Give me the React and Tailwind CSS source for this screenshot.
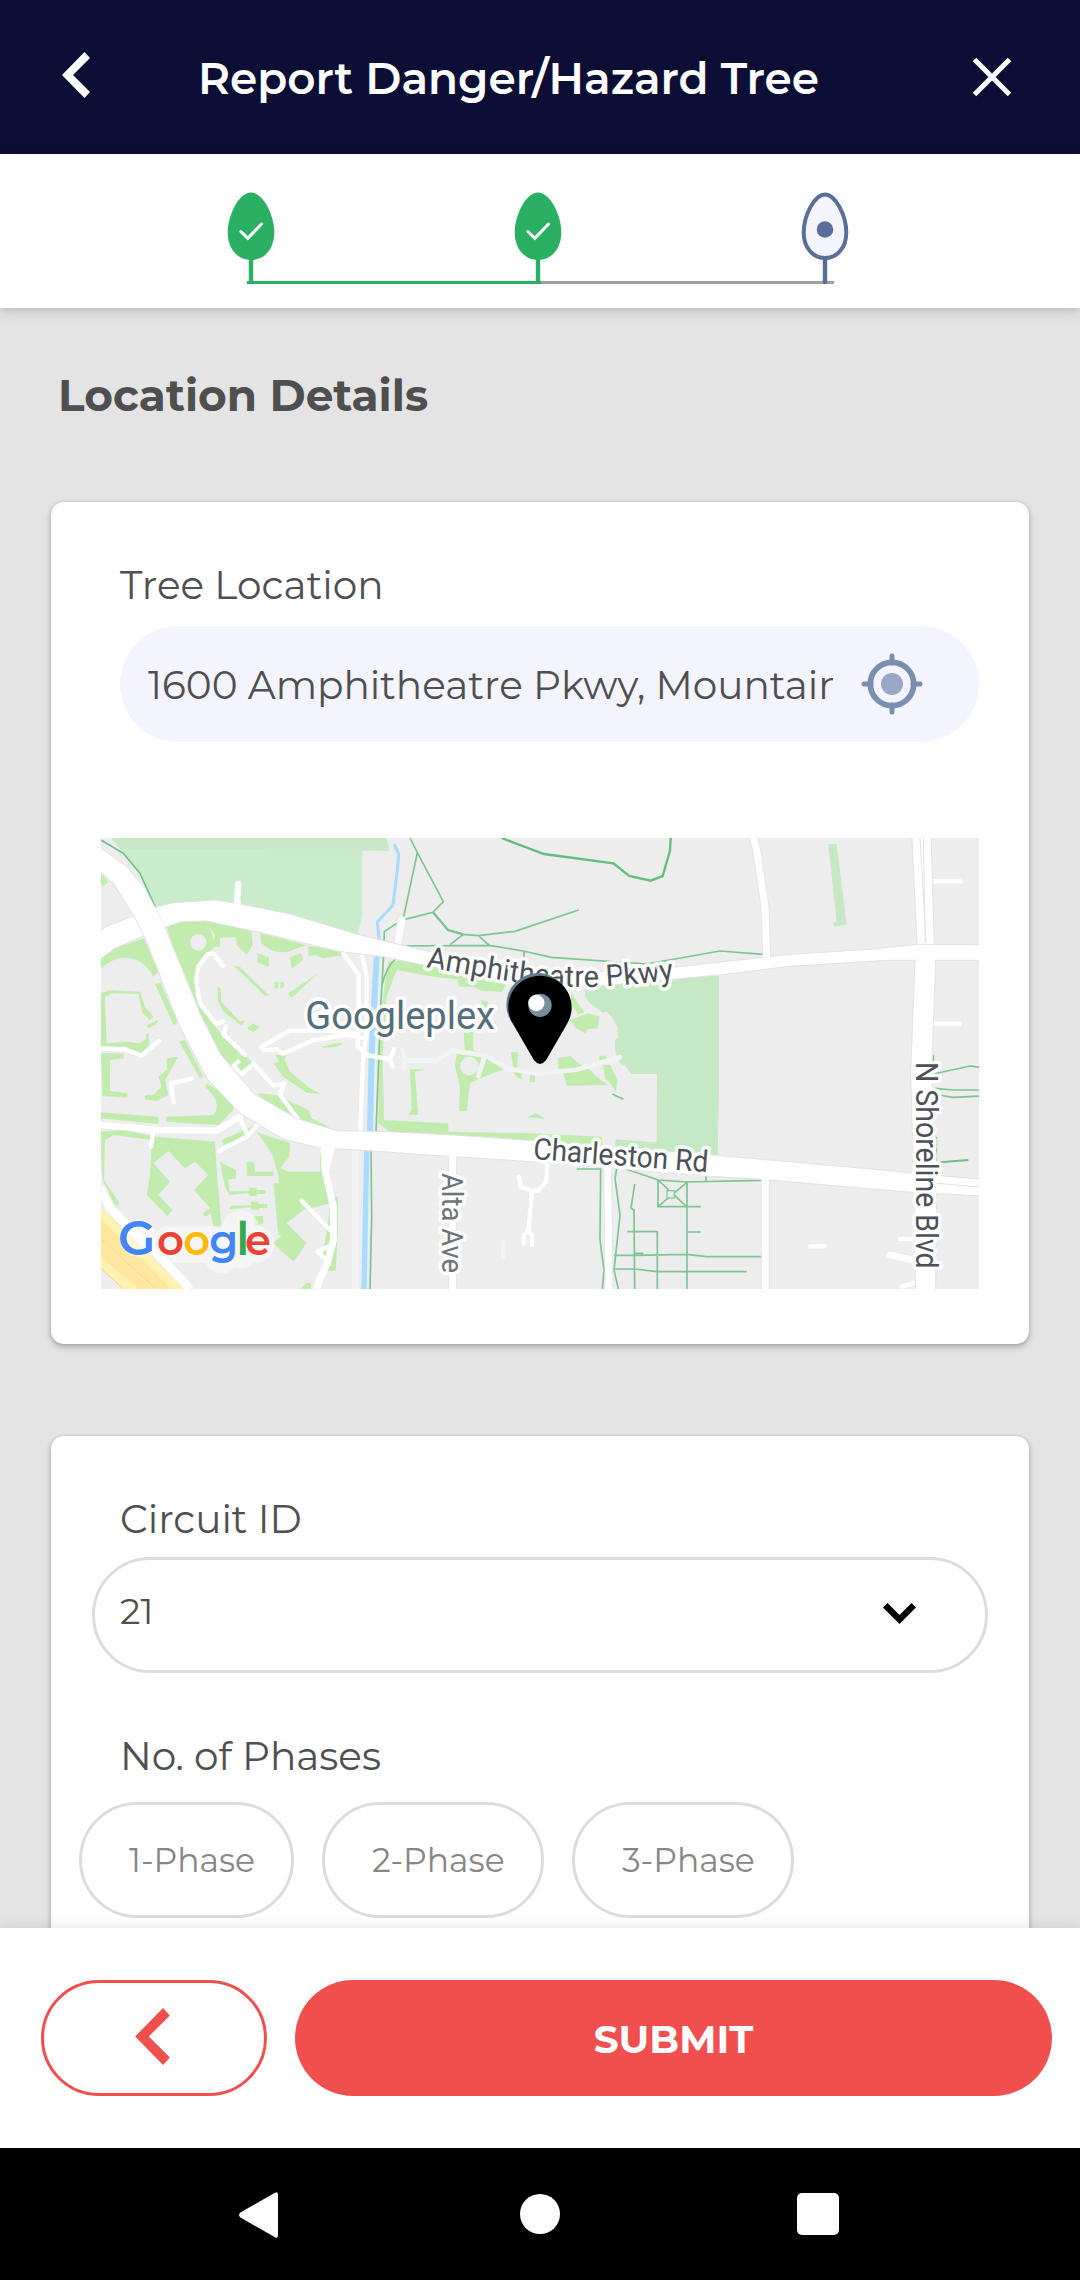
import React from "react";

const GREEN = "#2bb063";
const SLATE = "#5b6e99";

function BackChevron({ className }) {
  return (
    <svg className={className} viewBox="0 0 28 46" fill="currentColor">
      <polygon points="22.5,0 28,6 11,23 28,40 22.5,46 0,23" />
    </svg>
  );
}

/* One tree-shaped marker of the progress bar. */
function StepTree({ done }) {
  return (
    <svg className="h-[92px] w-[48px]" viewBox="0 0 48 92" fill="none">
      <path d="M24 66V90" stroke={done ? GREEN : SLATE} strokeWidth="4.4" strokeLinecap="round" />
      {done ? (
        <>
          <path d="M24 .5C36 .5 47.3 23 47.3 40.5C47.3 57 37.500 68 24 68S.7 57 .7 40.500C.7 23 12 .5 24 .5Z" fill={GREEN} />
          <path d="M13.800 39.500L20.800 46.300L34.500 32" stroke="#fff" strokeWidth="3" strokeLinecap="round" />
        </>
      ) : (
        <>
          <path d="M24 2.500C34.500 2.500 45.300 23.500 45.300 40.500C45.300 56 36 66 24 66S2.700 56 2.700 40.500C2.700 23.500 13.500 2.500 24 2.500Z" fill="#f4f4ff" stroke={SLATE} strokeWidth="4" />
          <circle cx="24" cy="37.500" r="8.300" fill={SLATE} />
        </>
      )}
    </svg>
  );
}

function Locate() {
  return (
    <svg className="h-[62px] w-[62px] shrink-0" viewBox="0 0 62 62" fill="none">
      <path d="M31 3V10M31 52V59M3 31H10M52 31H59" stroke="#7b8db0" strokeWidth="5" strokeLinecap="round" />
      <circle cx="31" cy="31" r="21.700" stroke="#7b8db0" strokeWidth="5.700" />
      <circle cx="31" cy="31" r="11" fill="#9ba7c6" />
    </svg>
  );
}

function MapLabel({ children, size, fill = "#4c5157", ...rest }) {
  return (
    <text
      fontFamily="Roboto, sans-serif"
      fontSize={size}
      fill={fill}
      stroke="#fff"
      strokeOpacity="0.8"
      strokeWidth="22"
      strokeLinejoin="round"
      paintOrder="stroke"
      lengthAdjust="spacingAndGlyphs"
      {...rest}
    >
      {children}
    </text>
  );
}

function LocationMap() {
  return (
    <svg className="ml-[50px] block h-[451px] w-[878px]" viewBox="33 54 2634 1353" preserveAspectRatio="none">
      <rect x="33" y="54" width="2634" height="1353" fill="#ededed" />

      {/* parks */}
      <g fill="#c9edca">
        <polygon points="65,54 890,54 898,92 817,92 817,290 802,342 600,290 440,256 375,244 195,265 150,160 100,100" />
        <polygon points="65,54 890,54 898,92 600,90 500,86 90,86" fill="#c8e8c7" />
        <g fill="#c5e8c5">
          <polygon points="1485,500 1600,490 1740,478 1887,465 1887,795 1883,1010 1575,990 1577,958 1700,967 1701,762 1625,762 1608,740 1590,730 1575,690 1575,660 1584,655 1582,620 1565,590 1550,575 1538,577 1498,548 1486,530" />
          <polygon points="2215,72 2240,72 2270,313 2232,320 2230,308 2240,305" />
        </g>
      </g>

      {/* landscaping */}
      <g fill="#c1ecae">
        <path d="M33 160L55 185L40 198L33 190Z" />
        <path d="M33 415L75 385L162 355L205 455L190 470C160 415 110 400 60 425L33 445Z" />
        <path d="M230 322L290 300L375 305L485 335L488 375L470 405L440 375L438 352L390 354V380H365L375 345L350 310Q375 345 370 385L350 400L325 430L312 480L318 530L330 560L400 650L490 730L440 760L380 690L310 560Z" />
        <path d="M510 340L650 375L622 385Q560 415 515 370ZM505 400L537 412V442L500 425ZM600 412L632 400L640 420L605 445ZM655 378L750 392L765 405L700 415L672 405L655 410Z" />
        <path d="M430 436L450 440L530 520L540 525L525 528L450 455ZM595 520L685 460L605 533ZM553 485H565V505H553ZM570 485H582V500L572 507ZM383 500L392 505L394 545L450 605L465 600L455 617L400 575L383 540ZM470 625L490 610L510 622L490 637Z" />
        <path d="M195 492L212 488L262 605L252 617ZM33 520L60 510L150 515L165 560L190 590L180 600L158 580L145 522L65 520L45 530L50 670L110 665L150 670L170 655L180 670L155 710L110 680L33 678Z" />
        <path d="M268 665L285 660L340 770L330 775ZM33 700L100 700L102 715L60 720V812L112 820V833L38 828ZM230 715L265 710L225 780L235 825L200 843L165 838V825L190 825L215 800L205 770L230 750ZM350 790C380 810 440 840 430 870L385 915L228 905V890L370 885Q400 850 345 800ZM33 877L205 890V912L33 895Z" />
        <path d="M550 730L585 720L600 755L660 805L693 822L650 818L580 770ZM505 820L560 825L655 870L665 895L720 922L650 910L520 850ZM555 705L590 705L575 735Z" />
        <path d="M695 680L745 668L760 672L740 680L705 684ZM168 640H176V680H168ZM170 615L205 600L200 612L175 625Z" />
        <path d="M33 935L100 930L200 950L375 965L380 1050L395 1225L370 1220L362 1180L345 1190L338 1180L360 1165L312 1110L355 1065L315 1025L285 1045L235 993L190 1030L240 1085L205 1125L248 1170L232 1187L170 1125L180 1070L185 960L70 945L45 960L42 1080L88 1150L80 1158L45 1110L35 1050Z" />
        <path d="M395 960L490 918L500 930L470 950L400 975ZM540 950L600 968L598 1010L570 1045L600 1055L690 1055V1000L710 1040L735 1130L744 1130V1230L737 1353H715L700 1300L715 1200L720 1150L640 1170L590 1210L650 1270L610 1325L550 1270L575 1245L565 1065L545 1000L500 935Z" />
        <path d="M550 1090L600 1088L705 1095L712 1130L640 1118L578 1122L575 1245L565 1245Z" />
        <path d="M390 1025L438 1050V1075L415 1078L420 1130L405 1100ZM470 1025H492L495 1055H550V1068H470ZM478 1103H500V1110H527V1122H500V1128H478L475 1120L420 1125V1114L478 1112ZM483 1145H505V1152H532V1164H508V1170H485L482 1162L420 1168V1158L483 1156ZM490 1188H520V1210L495 1218Z" />
        <path d="M880 520L895 425L940 422L1100 455L1250 490L1235 515L1175 512L1150 500L1105 500V478L1040 472L920 450L890 530L878 700L882 900L1075 910V935L1330 940L1535 950V975L1330 962L900 935L865 910L866 700Z" />
        <path d="M1120 620H1150V690L1175 705L1250 745L1170 775L1140 790L1130 873H1107L1110 800L1095 740L1100 700H1125ZM1175 540L1195 545L1192 620L1175 600ZM960 748H1010L975 755L985 885H955L965 870ZM1262 697H1283V745L1295 762V780L1275 765ZM1320 765H1335V787H1320ZM1310 892L1340 880L1365 896Z" />
        <path d="M1445 520L1460 545L1483 577L1465 583L1440 550ZM1440 600L1495 580L1528 590L1522 625L1490 628L1487 642L1455 622ZM1402 715L1440 708L1465 730L1495 745L1520 770L1553 795L1430 797L1420 760L1405 745ZM1540 735L1560 735L1583 780L1578 817L1565 795L1545 775ZM1528 707H1548V720H1528ZM650 1388L663 1390V1407H630Z" />
      </g>
      <circle cx="325" cy="367" r="25" fill="#ededed" />
      <circle cx="1138" cy="738" r="28" fill="#ededed" />

      {/* creek */}
      <g fill="none" stroke="#a9daff">
        <path d="M912 72L926 102L922 150L909 255L862 306L868 362" strokeWidth="9" />
        <path d="M860 410L845 700L840 935" strokeWidth="18" />
        <path d="M830 992L822 1407" strokeWidth="16" />
      </g>

      {/* trails */}
      <g fill="none" stroke="#7cc592" strokeWidth="5">
        <path d="M33 60L100 100L150 160L195 260" stroke="#6dbf85" />
        <path d="M960 54L982 98L1060 245L1029 277L945 298M982 98L940 295M1029 277L1074 330L1120 343L1165 347L1275 334L1466 270M920 310L883 335L880 420L872 560L858 935M1120 343L1080 374M1165 347L1198 376M930 378L1198 376L1300 393L1384 412L1670 432L1890 393L2020 403M1302 393V412M915 418Q890 440 876 495" />
        <path d="M1029 277L1074 330L1120 343" strokeWidth="7" />
        <path d="M843 992L845 1190L840 1407" />
        <path d="M1235 54L1362 102L1570 130L1618 168L1682 182L1718 168L1740 92L1742 54" stroke="#63bd7d" strokeWidth="7" />
        <path d="M1567 822L1600 838M1460 1047H1532L1530 1260L1542 1350L1537 1407M1580 1047L1575 1075L1590 1185L1572 1350L1585 1407M1610 1048L1705 1080L1790 1086L2013 1081M1848 1068V1085M1704 1080V1160H1832M1791 1086V1407M1704 1080L1790 1160M1790 1088L1704 1160M1634 1092L1623 1165L1632 1170L1634 1407M1612 1235H1702V1407M1790 1236H1832M1572 1306H1634L1790 1303L1850 1310H2013M1572 1347H1634L1702 1355H1970M1634 1300H1660" />
        <path d="M2530 705V740M2530 762L2640 738L2670 742M2535 805L2590 810H2670M2545 825L2590 832L2670 828M2539 950V1025" />
        <path d="M2550 1027L2635 1020" strokeWidth="6" stroke="#6dbf85" />
      </g>
      <rect x="1731" y="1112" width="22" height="22" fill="#ededed" stroke="#84c999" strokeWidth="4" />

      {/* faint drives */}
      <g fill="none" stroke="#f2f3f5" strokeLinecap="round" strokeLinejoin="round" strokeWidth="14">
        <path d="M938 690L945 722L940 745M945 722H1040L1085 692L1185 706L1250 745L1340 760L1455 750L1590 712M1185 706L1165 768" />
        <path d="M796 990V1407" strokeWidth="20" strokeLinecap="butt" />
        <path d="M1240 1265V1310" />
      </g>

      {/* minor streets */}
      <g fill="none" stroke="#fff" strokeLinecap="round" strokeLinejoin="round" strokeWidth="13">
        <path d="M398 436L370 400L352 403L325 440L318 480L330 550L378 612L398 605M408 620L400 643L465 705M445 725L430 738L455 762L480 740M490 730L550 797L583 790M580 795L570 825L635 912" />
        <path d="M515 680L598 632L700 632L800 640M520 690L560 688L578 702L665 662L770 645L825 655M760 400L806 465V600L803 680L830 705L900 718M912 688L900 718L908 740M815 400L830 470V640L820 705L810 935" />
        <path d="M33 686L105 688L155 706L207 663M305 776L243 790L251 847" />
        <path d="M190 935L183 980M450 895L470 940M503 915L470 950L388 992" />
        <path d="M33 915L205 930L380 932L450 890" strokeWidth="19" />
        <path d="M635 1142L730 1240M725 1275L682 1295L715 1325" />
        <path d="M1372 1030L1368 1085L1345 1112H1325L1292 1100L1287 1070M1326 1112L1315 1235L1302 1243L1301 1272M1315 1235L1326 1245V1275" />
        <path d="M445 192L440 255M937 298L920 385" strokeWidth="19" />
        <path d="M2530 184H2612M2530 611H2608M2160 1279H2204M2430 1257H2480M2480 1387L2435 1400" />
        <path d="M2400 1305L2480 1322" strokeWidth="20" />
      </g>
      <g fill="none" stroke="#fff" strokeLinejoin="round">
        <path d="M702 985L705 1050L730 1160L730 1260L712 1330L690 1375L680 1407M724 985L708 1045" strokeWidth="21" />
        <path d="M33 1100L60 1165L110 1215L200 1300L300 1407" strokeWidth="26" />
      </g>
      <g fill="none" strokeLinejoin="round">
        <path d="M1088 1000V1407M1990 54L2000 90L2025 260L2030 415M1553 1035L1557 1407M2026 1070V1407" stroke="#e1e1e8" strokeWidth="26" />
        <path d="M1088 1000V1407M1990 54L2000 90L2025 260L2030 415M1553 1035L1557 1407M2026 1070V1407" stroke="#fff" strokeWidth="21" />
      </g>

      {/* arterials */}
      <g fill="#fff" stroke="#e1e1e8" strokeWidth="3">
        <path d="M2465 40L2482 380L2475 422L2462 760L2470 1050L2477 1420H2537L2540 1050L2525 760L2537 422L2533 372L2523 40Z" />
        <path d="M20 335L60 315L130 288L195 262L250 248L375 240L440 250L600 282L800 342L880 362L1000 390L1200 430L1400 455H1600L1750 442L2100 403L2350 387L2480 373L2680 374V421H2390L2100 439L1885 465L1750 478L1560 495L1400 500L1200 465L1000 435L880 410L750 395L500 335L350 303L275 305L225 322L160 348L75 385L20 425Z" />
        <path d="M20 75L110 140L165 205L195 262L225 322L290 480L330 580L390 700L490 820L620 895L740 932L900 935L1090 945L1330 962L1880 1006L2320 1045L2560 1068L2680 1078V1128L2480 1118L2320 1105L2040 1080L1850 1068L1400 1030L1090 1010L800 990L690 985L580 957L450 880L350 775L265 610L200 440L162 348L130 285L70 190L20 145Z" />
      </g>
      <path d="M2484 374L2535 376L2532 425L2480 423ZM2466 1040H2538V1125H2478ZM135 285L195 264L225 320L165 350ZM435 240H452V262H435ZM2020 400H2039V420H2020ZM1078 1000H1098V1018H1078ZM1542 1035H1564V1052H1542ZM2016 1070H2036V1085H2016ZM694 975H733V995H694Z" fill="#fff" />
      <path d="M2490 54L2508 368M2500 54L2506 368M2540 1090L2670 1101" stroke="#e1e1e8" strokeWidth="3" fill="none" />
      <path d="M33 1163L283 1407H100L33 1345Z" fill="#fff1b0" />
      <path d="M33 1198L245 1407H200L33 1255ZM33 1262L190 1407H145L33 1310Z" fill="#ffe79e" />
      <path d="M33 1258L197 1407M33 1345L100 1407" stroke="#f2d27c" strokeWidth="3" />

      {/* place names */}
      <path id="pkwy" d="M1008 442C1180 470 1300 497 1440 500C1560 503 1650 492 1780 475" fill="none" />
      <MapLabel size="90">
        <textPath href="#pkwy" textLength="750" lengthAdjust="spacingAndGlyphs">Amphitheatre Pkwy</textPath>
      </MapLabel>
      <MapLabel size="118" fill="#546e7a" x="646" y="628" textLength="569">Googleplex</MapLabel>
      <MapLabel size="90" transform="translate(1328 1017) rotate(4.300)" textLength="526">Charleston Rd</MapLabel>
      <MapLabel size="86" fill="#6f7377" transform="translate(1056 1059) rotate(90)" textLength="300">Alta Ave</MapLabel>
      <MapLabel size="92" transform="translate(2477 726) rotate(90)" textLength="620">N Shoreline Blvd</MapLabel>

      {/* attribution */}
      <path d="M145 1254V1256M240 1273H498M396 1300V1305M452 1225V1290" fill="none" stroke="#fff" strokeOpacity="0.45" strokeWidth="110" strokeLinecap="round" />
      <text y="1306" fontFamily="Montserrat, Inter, sans-serif" fontSize="125" fontWeight="600">
        <tspan x="84" fontSize="146" fill="#4285f4">G</tspan>
        <tspan x="201" fill="#ea4335">o</tspan>
        <tspan x="280" fill="#fbbc05">o</tspan>
        <tspan x="358" fill="#4285f4">g</tspan>
        <tspan x="439" fontSize="136" fill="#34a853">l</tspan>
        <tspan x="465" fill="#ea4335">e</tspan>
      </text>

      {/* marker */}
      <circle cx="1344" cy="554" r="95" fill="#5f7d8c" />
      <path d="M1350 467C1403 467 1445 509 1445 562C1445 584 1438 600 1428 617L1368 721Q1350 743 1332 721L1272 617C1262 600 1255 584 1255 562C1255 509 1297 467 1350 467Z" fill="#000" />
      <circle cx="1350" cy="556" r="35" fill="#78909c" />
      <circle cx="1339" cy="549" r="24.500" fill="#fff" />
    </svg>
  );
}

function Card({ className = "", children }) {
  return (
    <section className={"w-[978px] shrink-0 rounded-[13px] bg-white shadow-[0_3px_6px_rgba(0,0,0,0.26),0_0_3px_rgba(0,0,0,0.12)] " + className}>
      {children}
    </section>
  );
}

function FieldLabel({ children }) {
  return <div className="ml-[69px] flex h-12 items-center text-[39px] leading-none">{children}</div>;
}

export default function App() {
  return (
    <div className="flex h-[2280px] w-[1080px] flex-col overflow-hidden bg-[#e4e4e4] font-[Montserrat,Inter,sans-serif] text-[#4f4f4f]">
      <header className="flex h-[154px] shrink-0 items-center bg-[#0d0e35] text-white">
        <BackChevron className="mb-1 ml-[62px] h-[46px] w-7" />
        <h1 className="ml-[108px] mt-[3px] w-[640px] whitespace-nowrap text-[43.8px] font-semibold leading-none">Report Danger/Hazard Tree</h1>
        <svg className="ml-[134px] h-10 w-10" viewBox="0 0 40 40" fill="none" stroke="#fff" strokeWidth="5">
          <path d="M2.500 2.500L37.500 37.500M37.500 2.500L2.500 37.500" />
        </svg>
      </header>

      <div className="z-10 h-[154px] shrink-0 bg-white pl-[227px] pt-[38px] shadow-[0_2px_13px_rgba(0,0,0,0.22)]">
        <div className="relative z-10 flex gap-[239px]">
          <StepTree done />
          <StepTree done />
          <StepTree />
        </div>
        <div className="-mt-[3px] ml-5 flex h-[3px] w-[587px] bg-[#a0a0a0]">
          <div className="h-full w-[294px] bg-[#2bb063]" />
        </div>
      </div>

      <main className="flex min-h-0 flex-1 flex-col overflow-hidden pl-[51px]">
        <h2 className="ml-[7px] mt-[64px] flex h-12 shrink-0 items-center text-[43.8px] font-bold leading-none">Location Details</h2>

        <Card className="mt-[82px] h-[842px] pt-[59px]">
          <FieldLabel>Tree Location</FieldLabel>
          <div className="ml-[69px] mt-[17px] flex h-[116px] w-[859px] items-center rounded-full bg-[#f4f4ff] pl-[28px]">
            <div className="h-14 w-[685px] overflow-hidden whitespace-nowrap text-[39px] leading-[58px]">1600 Amphitheatre Pkwy, Mountain</div>
            <div className="ml-[28px]">
              <Locate />
            </div>
          </div>
          <div className="mt-[96px]">
            <LocationMap />
          </div>
        </Card>

        <Card className="mt-[92px] h-[600px] pt-[59px]">
          <FieldLabel>Circuit ID</FieldLabel>
          <div className="ml-[41px] mt-[14px] flex h-[116px] w-[896px] items-center rounded-full border-[3px] border-[#dcdcdc] pl-[25px]">
            <span className="mb-[9px] w-[763px] text-[36px] leading-none">21</span>
            <svg className="mb-1 h-[21px] w-[33px]" viewBox="0 0 33 21" fill="#000">
              <polygon points="4.500,0 16.500,12 28.500,0 33,4.500 16.500,21 0,4.500" />
            </svg>
          </div>
          <div className="mt-[59px]">
            <FieldLabel>No. of Phases</FieldLabel>
          </div>
          <div className="ml-[28px] mt-[22px] flex gap-[28px] text-[33px] leading-none text-[#868686]">
            <div className="flex h-[116px] w-[215px] items-center rounded-full border-[3px] border-[#dcdcdc] pl-[47px] pt-px">1-Phase</div>
            <div className="flex h-[116px] w-[222px] items-center rounded-full border-[3px] border-[#dcdcdc] pl-[47px] pt-px">2-Phase</div>
            <div className="flex h-[116px] w-[222px] items-center rounded-full border-[3px] border-[#dcdcdc] pl-[47px] pt-px">3-Phase</div>
          </div>
        </Card>
      </main>

      <footer className="z-10 flex h-[220px] shrink-0 items-center gap-[28px] bg-white pl-[41px] shadow-[0_0_14px_rgba(0,0,0,0.12)]">
        <button className="flex h-[116px] w-[226px] items-center justify-center rounded-full border-[3px] border-[#f04f4e] pb-1 pr-1 text-[#f04f4e]">
          <BackChevron className="h-[57px] w-[35px]" />
        </button>
        <button className="flex h-[116px] w-[757px] items-center justify-center rounded-full bg-[#f04f4e] pt-[3px] text-[39px] font-bold leading-none text-white">SUBMIT</button>
      </footer>

      <nav className="z-10 flex h-[132px] shrink-0 items-center bg-black">
        <svg className="ml-[239px] mt-px h-[46px] w-[40px]" viewBox="0 0 40 46" fill="#fff">
          <path d="M36 .7Q39 -1 39 3V43Q39 47 36 45.300L1.500 25.500Q-1.500 23 1.500 20.500Z" />
        </svg>
        <div className="ml-[241px] h-10 w-10 rounded-full bg-white" />
        <div className="ml-[237px] h-[42px] w-[42px] rounded-[5px] bg-white" />
      </nav>
    </div>
  );
}
